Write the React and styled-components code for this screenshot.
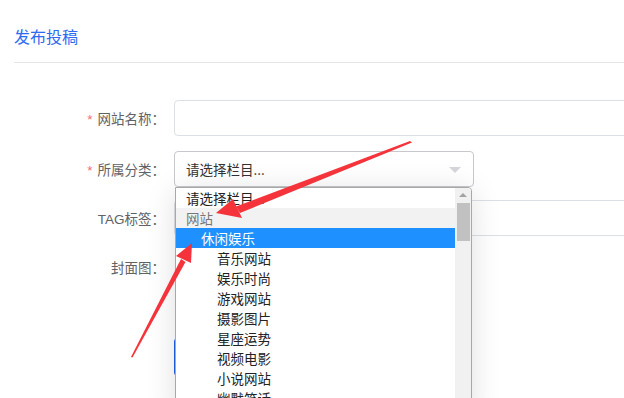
import React from "react";
import styled, { createGlobalStyle } from "styled-components";

const GlobalStyle = createGlobalStyle`
  html, body {
    margin: 0;
    padding: 0;
    background: #fff;
    overflow: hidden;
  }
  body {
    font-family: "Liberation Sans", "Noto Sans CJK SC", sans-serif;
  }
`;

const children = [
  "音乐网站",
  "娱乐时尚",
  "游戏网站",
  "摄影图片",
  "星座运势",
  "视频电影",
  "小说网站",
  "幽默笑话",
];

const Field = ({ label, required, children, top }) => (
  <StyledRow top={top}>
    <StyledLabel>
      {required && <StyledStar>*</StyledStar>}
      {label}：
    </StyledLabel>
    {children}
  </StyledRow>
);

const App = () => {
  return (
    <StyledPage>
      <GlobalStyle />
      <StyledHeader>发布投稿</StyledHeader>
      <StyledForm>
        <Field label="网站名称" required top={0}>
          <StyledInput />
        </Field>
        <Field label="所属分类" required top={15}>
          <StyledSelectWrap>
            <StyledSelect>
              <span>请选择栏目...</span>
              <StyledCaret />
            </StyledSelect>
            <StyledDropdown>
              <StyledList>
                <StyledOption>请选择栏目...</StyledOption>
                <StyledOption group>网站</StyledOption>
                <StyledOption active level={1}>
                  休闲娱乐
                </StyledOption>
                {children.map((c) => (
                  <StyledOption key={c} level={2}>
                    {c}
                  </StyledOption>
                ))}
              </StyledList>
              <StyledScrollbar>
                <StyledUp />
                <StyledThumb />
              </StyledScrollbar>
            </StyledDropdown>
          </StyledSelectWrap>
        </Field>
        <Field label="TAG标签" top={13}>
          <StyledInput />
        </Field>
        <Field label="封面图" top={13}>
          <StyledUpload />
        </Field>
        <StyledRow top={0}>
          <StyledLabel />
          <StyledButton />
        </StyledRow>
      </StyledForm>
      <StyledArrows width="624" height="398" viewBox="0 0 624 398">
        <path
          d="M410 141 L236 206.5 L240 213 L412 142.5 Z"
          fill="#f5333a"
        />
        <path d="M216 213 L233 199 L242 218 Z" fill="#f5333a" />
        <path
          d="M131 357 L181 259 L185.5 262 L132.5 357.5 Z"
          fill="#f5333a"
        />
        <path d="M192 243 L176 256 L191 263 Z" fill="#f5333a" />
      </StyledArrows>
    </StyledPage>
  );
};

const StyledPage = styled.div`
  position: relative;
  width: 624px;
  height: 398px;
  overflow: hidden;
  padding: 0 0 0 14px;
  box-sizing: border-box;
`;
const StyledHeader = styled.h2`
  margin: 0;
  height: 63px;
  line-height: 73px;
  font-size: 16px;
  font-weight: 400;
  color: #2d6cf0;
  border-bottom: 1px solid #e6e6e6;
  font-family: "Noto Sans CJK SC", sans-serif;
  box-sizing: border-box;
  margin-right: -20px;
`;
const StyledForm = styled.div`
  display: flex;
  flex-direction: column;
  padding-top: 37px;
`;
const StyledRow = styled.div`
  display: flex;
  align-items: center;
  margin-top: ${(p) => p.top}px;
  min-height: 36px;
`;
const StyledLabel = styled.div`
  width: 151px;
  flex: none;
  margin-right: 9px;
  text-align: right;
  font-size: 13.5px;
  color: #606266;
  font-family: "Liberation Sans", "Noto Sans CJK SC", sans-serif;
`;
const StyledStar = styled.span`
  color: #f56c6c;
  margin-right: 5px;
`;
const StyledInput = styled.div`
  flex: none;
  width: 480px;
  height: 36px;
  border: 1px solid #dcdfe6;
  border-radius: 4px;
  box-sizing: border-box;
  background: #fff;
`;
const StyledSelectWrap = styled.div`
  position: relative;
  width: 300px;
`;
const StyledSelect = styled.div`
  height: 36px;
  border: 1px solid #c6c8cc;
  border-radius: 4px;
  box-sizing: border-box;
  display: flex;
  align-items: center;
  justify-content: space-between;
  padding: 0 12px 0 11px;
  font-size: 13.5px;
  color: #333;
  font-family: "Noto Sans CJK SC", sans-serif;
`;
const StyledCaret = styled.span`
  width: 0;
  height: 0;
  border-left: 6px solid transparent;
  border-right: 6px solid transparent;
  border-top: 6px solid #d4d6da;
  margin-top: 2px;
`;
const StyledDropdown = styled.div`
  position: absolute;
  left: 1px;
  top: 36px;
  width: 297px;
  height: 230px;
  background: #fff;
  border: 1px solid #a8a8a8;
  border-radius: 0 4px 0 0;
  box-sizing: border-box;
  display: flex;
  box-shadow: 0 4px 30px rgba(0, 0, 0, 0.13);
  z-index: 2;
`;
const StyledList = styled.div`
  flex: 1;
  display: flex;
  flex-direction: column;
`;
const StyledOption = styled.div`
  height: 20px;
  line-height: 20px;
  font-size: 13.5px;
  font-family: "Noto Sans CJK SC", sans-serif;
  padding-left: ${(p) => (p.level === 2 ? 41 : p.level === 1 ? 25 : 10)}px;
  color: ${(p) => (p.active ? "#fff" : p.group ? "#777" : "#222")};
  background: ${(p) => (p.active ? "#1e90ff" : p.group ? "#f2f2f2" : "#fff")};
  white-space: nowrap;
`;
const StyledScrollbar = styled.div`
  width: 16px;
  flex: none;
  background: #f1f1f1;
  display: flex;
  flex-direction: column;
  align-items: center;
  border-radius: 0 3px 0 0;
`;
const StyledUp = styled.div`
  margin-top: 5px;
  width: 0;
  height: 0;
  border-left: 4px solid transparent;
  border-right: 4px solid transparent;
  border-bottom: 4px solid #a3a3a3;
`;
const StyledThumb = styled.div`
  margin-top: 6px;
  width: 13px;
  height: 38px;
  background: #c1c1c1;
`;
const StyledUpload = styled.div`
  width: 300px;
  height: 36px;
`;
const StyledButton = styled.div`
  margin-top: 53px;
  width: 90px;
  height: 38px;
  border-radius: 4px;
  background: #1f5ee8;
`;
const StyledArrows = styled.svg`
  position: absolute;
  left: 0;
  top: 0;
  pointer-events: none;
  z-index: 3;
`;

export default App;
